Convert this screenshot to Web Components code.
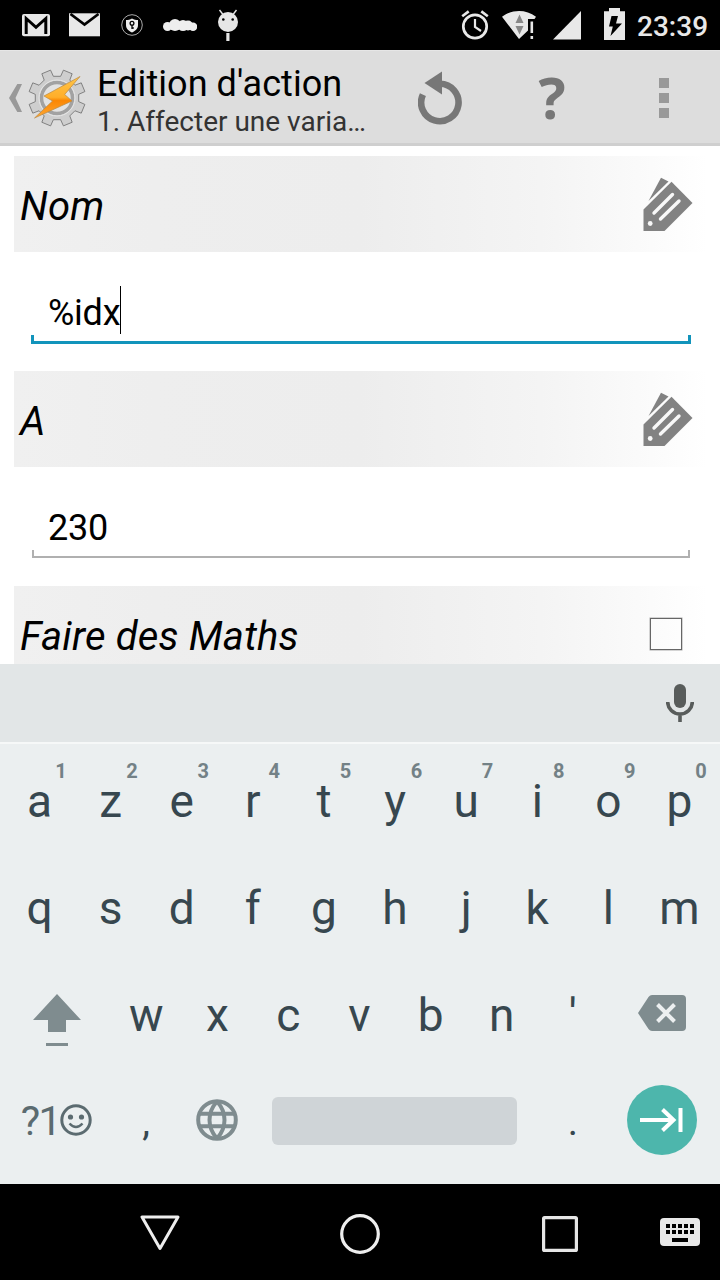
<!DOCTYPE html>
<html lang="fr">
<head>
<meta charset="utf-8">
<title>Edition d'action</title>
<style>
html, body {
    margin: 0;
    height: 100%;
    background: #fff;
    font-family: Roboto, "Noto Sans", sans-serif;
}
body {
    width: 720px;
    height: 1280px;
    display: flex;
    flex-direction: column;
    overflow: hidden;
}
.form {
    flex: 1;
    min-height: 0;
    overflow: hidden;
    padding: 10px 14px 0;
}
</style>
</head>
<body>
<status-bar time="23:39"></status-bar>
<action-bar>
    Edition d'action
    <span slot="subtitle">1. Affecter une varia…</span>
</action-bar>
<main class="form">
    <form-header>Nom<ui-icon slot="action" name="tag"></ui-icon></form-header>
    <text-field focused>%idx</text-field>
    <form-header>A<ui-icon slot="action" name="tag"></ui-icon></form-header>
    <text-field>230</text-field>
    <form-header>Faire des Maths<check-box slot="action"></check-box></form-header>
</main>
<soft-keyboard></soft-keyboard>
<nav-bar></nav-bar>

<script>
// eight teeth, centred on 0,0
function gearPath(outer, root) {
  const points = [];
  for (let i = 0; i < 8; i++) {
    const mid = 22.5 + i * 45;
    [[-13, root], [-9.5, outer], [9.5, outer], [13, root]].forEach(([offset, r]) => {
      const a = ((mid + offset) * Math.PI) / 180;
      points.push(`${(Math.cos(a) * r).toFixed(2)} ${(Math.sin(a) * r).toFixed(2)}`);
    });
  }
  return `M${points.join("L")}z`;
}

// name: [width, height, markup]
const ICONS = {
  gmail: [28, 50, `
    <rect y="14" width="28" height="22.3" rx="2" fill="#e8e8e8"/>
    <path d="M4.2 34V18.500L14 27.300 23.800 18.500V34" fill="none" stroke="#000" stroke-width="3"/>`],
  mail: [31, 50, `
    <path d="M0 13.300h31v23H0z" fill="#e8e8e8"/>
    <path d="M1.500 14L15.500 24.500 29.500 14" fill="none" stroke="#000" stroke-width="2.800"/>`],
  shield: [22, 50, `
    <circle cx="11" cy="25" r="10.300" fill="none" stroke="#aaa" stroke-width="1"/>
    <path d="M11 18.500c2 1.200 4 1.500 6 1.500v5c0 4-3 6-6 7.500-3-1.500-6-3.500-6-7.500v-5c2 0 4-.3 6-1.500z" fill="#eee"/>
    <circle cx="11" cy="23.300" r="1.900" fill="none" stroke="#000" stroke-width="1.300"/>
    <path d="M11 25v4M11 28h1.800" stroke="#000" stroke-width="1.300"/>`],
  cloud: [34, 50, `
    <g fill="#eee"><circle cx="4.500" cy="26.500" r="4.500"/><ellipse cx="12" cy="25" rx="6" ry="6"/>
    <circle cx="20" cy="25.500" r="5.500"/><circle cx="25" cy="25.500" r="5"/><circle cx="30" cy="26.700" r="4.300"/></g>`],
  android: [20, 50, `
    <circle cx="10" cy="22" r="10" fill="#e6e6e6"/>
    <path d="M1.500 10l3.500 4.500M18.500 10L15 14.500" stroke="#e6e6e6" stroke-width="1.400"/>
    <circle cx="5.300" cy="19.500" r="1.300"/><circle cx="14.700" cy="19.500" r="1.300"/>
    <path d="M8.300 33h3.200v8H8.300z" fill="#e6e6e6"/>`],
  alarm: [28, 50, `
    <g fill="none" stroke="#e8e8e8"><circle cx="14" cy="26.500" r="11.700" stroke-width="2.700"/>
    <path d="M1.200 16.300L7.700 11.400M26.800 16.300L20.300 11.400" stroke-width="2.600"/>
    <path d="M14 19v8l6 4" stroke-width="2.200"/></g>`],
  wifi: [34, 50, `
    <path d="M0 16.700C10 9 24 9 34 16.700L32.500 19H26v11.500L17 39z" fill="#e8e8e8"/>
    <path d="M17.500 14.500l4 8.500h-8zM17.500 34.500l4-8.500h-8z" fill="#888"/>
    <path d="M28.500 21.500h2.600v11.500h-2.600zM28.500 36h2.600v3h-2.600z" fill="#e8e8e8"/>`],
  signal: [28, 50, `<path d="M0 39.500L28 11v28.500z" fill="#e8e8e8"/>`],
  battery: [21, 50, `
    <path d="M5 8h11v3.300h5V40H0V11.300h5z" fill="#e8e8e8"/>
    <path d="M7.500 16h6.500l-2 7.500h6L6.500 36l2.300-9.500H5z" fill="#000"/>`],

  chevron: [13, 28, `<path d="M8.300 0H13L6.500 14 13 28H8.300L0 14z" fill="#999"/>`],
  gear: [58, 58, `
    <defs><linearGradient id="bolt" x1="0" y1="0" x2="0" y2="1">
    <stop offset="0" stop-color="#ffc548"/><stop offset=".5" stop-color="#ffae2a"/>
    <stop offset=".58" stop-color="#fb8704"/><stop offset="1" stop-color="#ffa733"/></linearGradient></defs>
    <path transform="translate(29 29)" d="${gearPath(28.6, 22)}" fill="#cecece" stroke="#777" stroke-width=".9" stroke-linejoin="round"/>
    <circle cx="29" cy="29" r="15.500" fill="#e2e2e2" stroke="#a2a2a2" stroke-width="3.500"/>
    <circle cx="29" cy="29" r="18" fill="none" stroke="#e6e6e6" stroke-width="1"/>
    <path d="M52 7.500L16 27l8.500 5L6.500 49 44 32l-7.300-6.500z" fill="url(#bolt)" stroke="#b98a45" stroke-width=".7"/>`],
  refresh: [44, 54, `
    <path d="M4.900 23.600A18.700 18.700 0 1 0 22 12.800" fill="none" stroke="#777" stroke-width="6.600"/>
    <path d="M24 .5v23L6.500 12z" fill="#777"/>`],
  overflow: [10, 40, `<path d="M0 0h10v10H0zM0 15h10v10H0zM0 30h10v10H0z" fill="#999"/>`],

  tag: [50, 54, `
    <path d="M18 .800l7.500 3.700L5.500 24z" fill="#828282"/>
    <path d="M28.500 4.800L49.500 26 21.500 54H.5V32.500z" fill="#828282"/>
    <path d="M11 36L29.500 17.500M17.500 42L36 24" stroke="#f8f8f8" stroke-width="3.400" stroke-linecap="round"/>
    <circle cx="7.200" cy="46.500" r="2.400" fill="#f8f8f8"/>`],

  mic: [28, 38, `
    <rect x="8" width="12" height="24" rx="6" fill="#585c5b"/>
    <path d="M1.700 18a12.300 12 0 0 0 24.600 0M14 30v8" fill="none" stroke="#585c5b" stroke-width="3.600"/>`],
  shift: [48, 52, `
    <path d="M24 0l24 26H33v12H15V26H0z" fill="#7f8c8f"/><path d="M13 49h22v3H13z" fill="#7f8c8f"/>`],
  backspace: [48, 36, `
    <path d="M14 0h30a4 4 0 0 1 4 4v28a4 4 0 0 1-4 4H14q-2 0-3.500-2L0 18 10.500 2Q12 0 14 0z" fill="#7f8c8f"/>
    <path d="M19.500 9.500l17 17M36.500 9.500l-17 17" stroke="#eceff0" stroke-width="4"/>`],
  smile: [32, 32, `
    <circle cx="16" cy="16" r="14.200" fill="none" stroke="#5b6b70" stroke-width="3"/>
    <circle cx="10.500" cy="13" r="2.600" fill="#5b6b70"/><circle cx="21.500" cy="13" r="2.600" fill="#5b6b70"/>
    <path d="M9.500 19.500q6.500 7 13 0" fill="none" stroke="#5b6b70" stroke-width="2.500"/>`],
  globe: [42, 42, `
    <g fill="none" stroke="#7f8c8f" stroke-width="4"><circle cx="21" cy="21" r="18.800"/>
    <path d="M3.500 14.700h35M3.500 27.300h35M21 2.500c-10 11-10 26 0 37M21 2.500c10 11 10 26 0 37"/></g>`],
  next: [43, 24, `
    <path d="M0 12h33M22.500 1.500L33.500 12 22.500 22.500M40.500 0v24" fill="none" stroke="#fff" stroke-width="4"/>`],

  back: [40, 36, `<path d="M2 2h36L20 33.500z" fill="none" stroke="#eee" stroke-width="3" stroke-linejoin="round"/>`],
  home: [40, 40, `<circle cx="20" cy="20" r="18.300" fill="none" stroke="#eee" stroke-width="3.200"/>`],
  recent: [36, 36, `<rect x="1.600" y="1.600" width="32.800" height="32.800" rx="1" fill="none" stroke="#e6e6e6" stroke-width="3.200"/>`],
  keyboard: [40, 28, `
    <rect width="40" height="28" rx="4" fill="#e8e8e8"/>
    <path d="M6 8h28M6 14h28" stroke="#000" stroke-width="4" stroke-dasharray="4 2"/>
    <path d="M12 20h16v4H12z" fill="#000"/>`],
};

class UiIcon extends HTMLElement {
  connectedCallback() {
    const [w, h, markup] = ICONS[this.getAttribute("name")];
    const shadow = this.attachShadow({ mode: "open" });
    shadow.innerHTML = `
<style>
:host { display: block; flex: none; width: ${w}px; height: ${h}px; }
svg { display: block; }
</style>
<svg width="${w}" height="${h}" viewBox="0 0 ${w} ${h}">${markup}</svg>`;
  }
}

class StatusBar extends HTMLElement {
  connectedCallback() {
    const shadow = this.attachShadow({ mode: "open" });
    shadow.innerHTML = `
<style>
:host {
    display: flex;
    justify-content: space-between;
    flex: none;
    height: 50px;
    background: #000;
    color: #e8e8e8;
}
.group { display: flex; align-items: center; }
.group--left { padding-left: 22px; gap: 20px; }
.group--left [name="mail"] { margin-left: -1px; }
.group--left [name="shield"],
.group--left [name="android"] { margin-left: 1px; }
.group--right [name="wifi"] { margin-left: 13px; }
.group--right [name="signal"] { margin-left: 17px; }
.group--right [name="battery"] { margin: 0 12px 0 23px; }
.time { width: 83px; font-size: 28px; font-weight: 500; padding-top: 2px; }
</style>
<div class="group group--left">
    <ui-icon name="gmail"></ui-icon>
    <ui-icon name="mail"></ui-icon>
    <ui-icon name="shield"></ui-icon>
    <ui-icon name="cloud"></ui-icon>
    <ui-icon name="android"></ui-icon>
</div>
<div class="group group--right">
    <ui-icon name="alarm"></ui-icon>
    <ui-icon name="wifi"></ui-icon>
    <ui-icon name="signal"></ui-icon>
    <ui-icon name="battery"></ui-icon>
    <span class="time">${this.getAttribute("time")}</span>
</div>`;
  }
}

class ActionBar extends HTMLElement {
  connectedCallback() {
    const shadow = this.attachShadow({ mode: "open" });
    shadow.innerHTML = `
<style>
:host {
    display: flex;
    align-items: center;
    flex: none;
    box-sizing: border-box;
    height: 96px;
    padding: 2px 0 0 9px;
    background: #ddd;
    border-top: 1px solid #e6e6e6;
    border-bottom: 3px solid #cfcfcf;
}
ui-icon[name="gear"] { margin: 0 11px 0 6px; }
.titles { width: 287px; padding-top: 8px; white-space: nowrap; }
.title { font-size: 36px; line-height: 39px; letter-spacing: 0.07px; color: #000; }
.subtitle { font-size: 28px; line-height: 36px; color: #333; }
.actions {
    flex: 1;
    display: grid;
    grid-template-columns: repeat(3, 112px);
    place-items: center;
}
.help { font: 700 57px/58px "Open Sans", sans-serif; margin-top: -2px; color: #777; }
</style>
<ui-icon name="chevron"></ui-icon>
<ui-icon name="gear"></ui-icon>
<div class="titles">
    <div class="title"><slot></slot></div>
    <div class="subtitle"><slot name="subtitle"></slot></div>
</div>
<div class="actions">
    <ui-icon name="refresh"></ui-icon>
    <span class="help">?</span>
    <ui-icon name="overflow"></ui-icon>
</div>`;
  }
}

class FormHeader extends HTMLElement {
  connectedCallback() {
    const shadow = this.attachShadow({ mode: "open" });
    shadow.innerHTML = `
<style>
:host {
    display: flex;
    align-items: center;
    justify-content: space-between;
    height: 96px;
    margin-right: -1px;
    padding: 0 14px 0 6px;
    box-sizing: border-box;
    background: linear-gradient(90deg, #f0f0f0, #eee 20%, #ededed 50%, #f4f4f4 76%, #fafafa 90%, #fff);
}
.label { font-size: 40px; font-style: italic; letter-spacing: 0.2px; color: #000; padding-top: 4px; }
</style>
<span class="label"><slot></slot></span>
<slot name="action"></slot>`;
  }
}

class TextField extends HTMLElement {
  connectedCallback() {
    const shadow = this.attachShadow({ mode: "open" });
    shadow.innerHTML = `
<style>
:host {
    display: flex;
    flex-direction: column;
    box-sizing: border-box;
    height: 119px;
    padding: 34px 16px 0 18px;
}
.value {
    display: flex;
    align-items: center;
    height: 48px;
    padding-left: 16px;
    font-size: 36px;
    letter-spacing: -0.25px;
    color: #000;
    white-space: pre;
}
.value span { padding-top: 5px; }
.line {
    height: 6px;
    margin-top: 1px;
    border: 2px solid #b0b0b0;
    border-top: 0;
}
:host([focused]) .line {
    margin: 1px -1px 0;
    border: 3px solid #1294bb;
    border-top: 0;
}
:host([focused]) .value::after {
    content: "";
    width: 1px;
    height: 48px;
    background: #000;
}
</style>
<div class="value"><span><slot></slot></span></div>
<div class="line"></div>`;
  }
}

class CheckBox extends HTMLElement {
  connectedCallback() {
    const shadow = this.attachShadow({ mode: "open" });
    shadow.innerHTML = `
<style>
:host {
    display: block;
    box-sizing: border-box;
    width: 32px;
    height: 32px;
    margin-right: 11px;
    border: 1px solid #666;
    box-shadow: 0 0 0 0.5px #aaa;
}
</style>`;
  }
}

class KeyCap extends HTMLElement {
  connectedCallback() {
    const hint = this.getAttribute("hint");
    const shadow = this.attachShadow({ mode: "open" });
    shadow.innerHTML = `
<style>
:host {
    display: flex;
    align-items: center;
    justify-content: center;
    position: relative;
    font-size: 46px;
    color: #37474f;
}
:host([small]) { font-size: 39px; }
.hint {
    position: absolute;
    top: 12px;
    left: 47px;
    width: 20px;
    text-align: center;
    font-size: 20px;
    line-height: 24px;
    font-weight: 700;
    color: #738186;
}
</style>
<slot></slot>${hint ? `<span class="hint">${hint}</span>` : ""}`;
  }
}

const letters = (text) => [...text].map((c) => `<key-cap>${c}</key-cap>`).join("");

class SoftKeyboard extends HTMLElement {
  connectedCallback() {
    const shadow = this.attachShadow({ mode: "open" });
    const top = [..."azertyuiop"]
      .map((c, i) => `<key-cap hint="${(i + 1) % 10}">${c}</key-cap>`)
      .join("");
    // half-key columns, so that the outer keys can be one key and a half wide
    shadow.innerHTML = `
<style>
:host {
    display: flex;
    flex-direction: column;
    flex: none;
    height: 520px;
    background: #ebeff0;
}
.strip {
    display: flex;
    align-items: center;
    justify-content: flex-end;
    box-sizing: border-box;
    height: 80px;
    padding-right: 26px;
    background: #e2e6e7;
    border-bottom: 2px solid #f6f8f8;
}
.keys {
    display: grid;
    grid-template-columns: repeat(20, 1fr);
    grid-auto-rows: 107px;
    padding: 3px 5px 0 4px;
}
key-cap { grid-column: span 2; }
key-cap[wide] { grid-column: span 3; }
.space { grid-column: span 8; align-self: center; height: 48px; margin: 0 20px 2px 19px; border-radius: 6px; background: #cfd4d7; }
.symbols { font-size: 41px; color: #5b6b70; letter-spacing: -1.7px; margin-top: -2px; }
.symbols + ui-icon { margin: -4px 2px 0 0; }
.enter {
    display: flex;
    align-items: center;
    justify-content: center;
    width: 70px;
    height: 70px;
    margin-top: -3px;
    border-radius: 50%;
    background: #4db6ac;
}
[name="shift"] { margin-top: 10px; }
[name="backspace"], [name="globe"] { margin-top: -3px; }
</style>
<div class="strip"><ui-icon name="mic"></ui-icon></div>
<div class="keys">
    ${top}
    ${letters("qsdfghjklm")}
    <key-cap wide><ui-icon name="shift"></ui-icon></key-cap>
    ${letters("wxcvbn'")}
    <key-cap wide><ui-icon name="backspace"></ui-icon></key-cap>
    <key-cap wide><span class="symbols">?1</span><ui-icon name="smile"></ui-icon></key-cap>
    <key-cap small>,</key-cap>
    <key-cap><ui-icon name="globe"></ui-icon></key-cap>
    <div class="space"></div>
    <key-cap small>.</key-cap>
    <key-cap wide><span class="enter"><ui-icon name="next"></ui-icon></span></key-cap>
</div>`;
  }
}

class NavBar extends HTMLElement {
  connectedCallback() {
    const shadow = this.attachShadow({ mode: "open" });
    shadow.innerHTML = `
<style>
:host {
    display: grid;
    grid-template-columns: 200px 200px 200px 40px;
    justify-content: end;
    align-items: center;
    justify-items: center;
    flex: none;
    box-sizing: border-box;
    height: 96px;
    padding: 4px 20px 0 0;
    background: #000;
}
[name="back"] { margin-top: -3px; }
[name="keyboard"] { margin-top: -4px; }
</style>
<ui-icon name="back"></ui-icon>
<ui-icon name="home"></ui-icon>
<ui-icon name="recent"></ui-icon>
<ui-icon name="keyboard"></ui-icon>`;
  }
}

customElements.define("ui-icon", UiIcon);
customElements.define("status-bar", StatusBar);
customElements.define("action-bar", ActionBar);
customElements.define("form-header", FormHeader);
customElements.define("text-field", TextField);
customElements.define("check-box", CheckBox);
customElements.define("key-cap", KeyCap);
customElements.define("soft-keyboard", SoftKeyboard);
customElements.define("nav-bar", NavBar);
</script>
</body>
</html>
